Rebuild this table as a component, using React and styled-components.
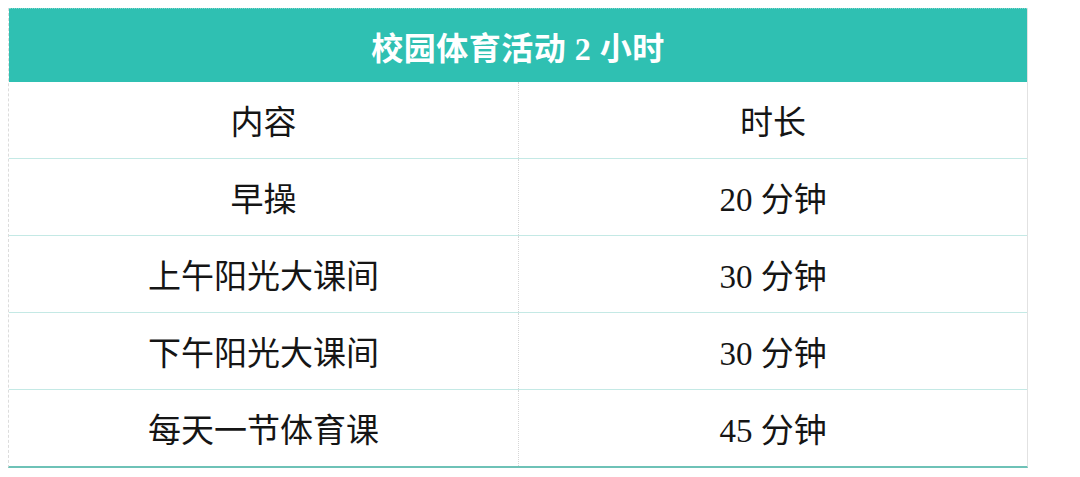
import React from "react";
import styled, { createGlobalStyle } from "styled-components";

const GlobalStyle = createGlobalStyle`
  html, body {
    margin: 0;
    padding: 0;
    background: #ffffff;
  }
  body {
    font-family: "Liberation Serif", "Noto Sans CJK SC", serif;
  }
`;

const Page = styled.div`
  padding: 8px 0 0 8px;
`;

const Table = styled.div`
  width: 1020px;
  display: flex;
  flex-direction: column;
  border-left: 1px dashed #dcdcdc;
  border-right: 1px solid #e2e2e2;
  border-bottom: 2px solid #6ec2b7;
  box-sizing: border-box;
`;

const Title = styled.div`
  height: 74px;
  background: #2fc0b2;
  border-top: 1px dotted #7fd6cd;
  box-sizing: border-box;
  display: flex;
  align-items: center;
  justify-content: center;
  color: #ffffff;
  font-size: 32px;
  font-weight: 700;
  letter-spacing: 0.5px;
`;

const Row = styled.div`
  display: grid;
  grid-template-columns: 510px 1fr;
  height: ${(p) => (p.$last ? "76px" : "77px")};
  box-sizing: border-box;
  border-bottom: ${(p) => (p.$last ? "none" : "1px solid #c4e9e5")};
`;

const Cell = styled.div`
  display: flex;
  align-items: center;
  justify-content: center;
  font-size: 33px;
  color: #151515;
  border-right: ${(p) => (p.$first ? "1px dotted #d6d6d6" : "none")};
`;

const rows = [
  ["内容", "时长"],
  ["早操", "20 分钟"],
  ["上午阳光大课间", "30 分钟"],
  ["下午阳光大课间", "30 分钟"],
  ["每天一节体育课", "45 分钟"],
];

export default function App() {
  return (
    <Page>
      <GlobalStyle />
      <Table>
        <Title>校园体育活动 2 小时</Title>
        {rows.map((r, i) => (
          <Row key={i} $last={i === rows.length - 1}>
            <Cell $first>{r[0]}</Cell>
            <Cell>{r[1]}</Cell>
          </Row>
        ))}
      </Table>
    </Page>
  );
}
